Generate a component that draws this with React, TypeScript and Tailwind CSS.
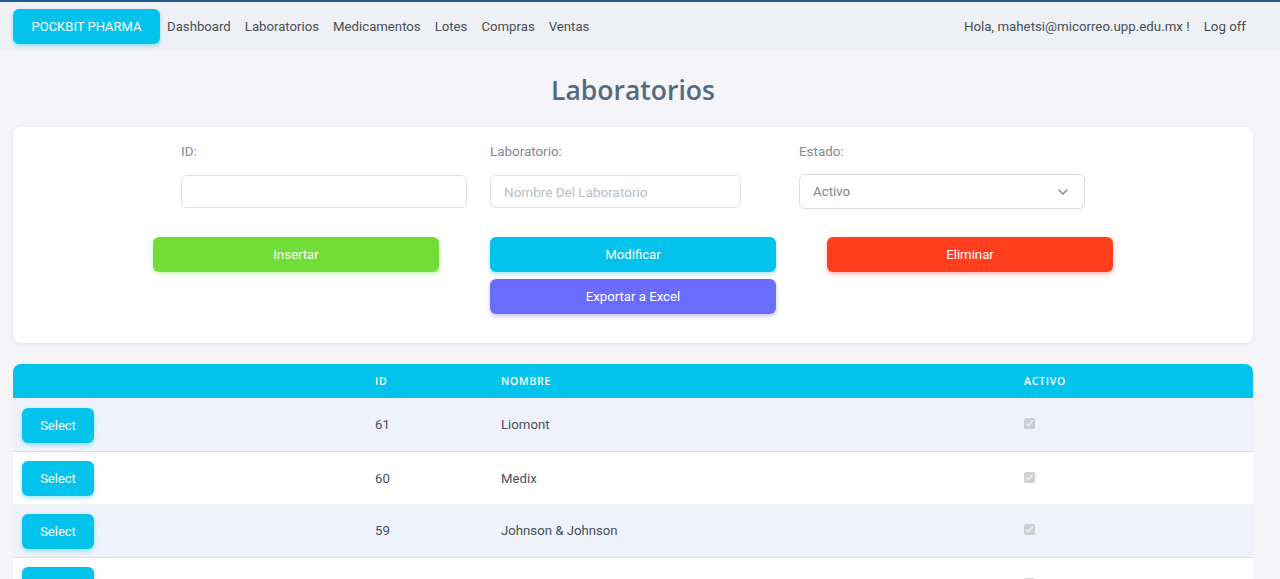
import { ChevronDown } from "lucide-react";

const NAV_LINKS = ["Dashboard", "Laboratorios", "Medicamentos", "Lotes", "Compras", "Ventas"];

// the fourth row runs off the bottom of the window, only the top of its button shows
const ROWS = [
  { id: "61", name: "Liomont", label: "Select" },
  { id: "60", name: "Medix", label: "Select" },
  { id: "59", name: "Johnson & Johnson", label: "Select" },
  { id: "", name: "", label: "" },
];

function Field({ label, width, children }: { label: string; width: string; children: React.ReactNode }) {
  return (
    <div className={width}>
      <label className="mb-[13px] block pt-[1px] text-[13.4px] leading-[20px] text-[#7f8a96]">{label}</label>
      {children}
    </div>
  );
}

export default function App() {
  return (
    <div className="h-[579px] overflow-hidden bg-[#f5f5f9] font-['Roboto',sans-serif]">
      <nav className="flex h-[51px] items-center justify-between border-t-2 border-[#1d5a8a] bg-[#eef0f4] pl-[13px] pr-[34px] text-[13.2px] text-[#4a4f55]">
        <div className="flex items-center">
          <a className="mr-[7px] flex h-[35px] w-[147px] items-center justify-center rounded-[6px] bg-[#03c3ec] text-[13px] text-white shadow-[0_2px_4px_rgba(3,195,236,0.4)]">
            POCKBIT PHARMA
          </a>
          <ul className="flex gap-[14px]">
            {NAV_LINKS.map((link) => (
              <li key={link}>{link}</li>
            ))}
          </ul>
        </div>
        <div className="flex gap-[14px] text-[13.3px]">
          <span>Hola, mahetsi@micorreo.upp.edu.mx !</span>
          <span>Log off</span>
        </div>
      </nav>

      <main className="w-[1266px] px-[13px]">
        <h1 className="mt-[19px] text-center font-['Open_Sans',sans-serif] text-[26.5px] font-semibold leading-[40px] text-[#566a7f]">Laboratorios</h1>

        <section className="mt-[17px] h-[216px] rounded-[8px] bg-white pt-[14px] shadow-[0_1px_4px_rgba(67,89,113,0.12)]">
          <div className="flex pl-[168px]">
            <Field label="ID:" width="w-[286px]">
              <input className="block h-[33px] w-full rounded-[6px] border border-[#dfe2e6] bg-white" />
            </Field>
            <Field label="Laboratorio:" width="ml-[23px] w-[251px]">
              <input
                placeholder="Nombre Del Laboratorio"
                className="block h-[33px] w-full rounded-[6px] border border-[#dfe2e6] bg-white px-[13px] text-[13.5px] placeholder:text-[#b8bec5]"
              />
            </Field>
            <Field label="Estado:" width="ml-[58px] w-[286px]">
              <div className="-mt-px flex h-[35px] items-center justify-between rounded-[6px] border border-[#d9dde1] bg-white px-[13px] text-[13.3px] text-[#7b858f]">
                <span>Activo</span>
                <ChevronDown className="h-[16px] w-[16px] text-[#7b858f]" />
              </div>
            </Field>
          </div>

          <div className="mt-[28px] flex items-start gap-[51px] pl-[140px] text-[13.2px] text-white">
            <button className="h-[35px] w-[286px] rounded-[6px] bg-[#71dd37] pt-[1px] shadow-[0_2px_4px_rgba(113,221,55,0.4)]">Insertar</button>
            <div className="flex w-[286px] flex-col gap-[7px]">
              <button className="h-[35px] rounded-[6px] bg-[#03c3ec] pt-[1px] shadow-[0_2px_4px_rgba(3,195,236,0.4)]">Modificar</button>
              <button className="h-[35px] rounded-[6px] bg-[#696cff] shadow-[0_2px_4px_rgba(105,108,255,0.4)]">Exportar a Excel</button>
            </div>
            <button className="h-[35px] w-[286px] rounded-[6px] bg-[#ff3e1d] pt-[1px] shadow-[0_2px_4px_rgba(255,62,29,0.4)]">Eliminar</button>
          </div>
        </section>

        <section className="mt-[21px]">
          <table className="w-full table-fixed border-collapse text-[13.2px] text-[#4a4f55]">
            <colgroup>
              <col className="w-[353px]" />
              <col className="w-[126px]" />
              <col className="w-[523px]" />
              <col />
            </colgroup>
            <thead>
              <tr className="h-[34px] bg-[#03c3ec] text-left font-['Open_Sans',sans-serif] text-[10.5px] font-semibold tracking-[0.75px] text-white">
                <th className="rounded-tl-[8px]" />
                <th className="px-[9px] pt-[1px] font-semibold">ID</th>
                <th className="px-[9px] pt-[1px] font-semibold">NOMBRE</th>
                <th className="rounded-tr-[8px] px-[9px] pt-[1px] font-semibold">ACTIVO</th>
              </tr>
            </thead>
            <tbody>
              {ROWS.map((row, i) => (
                <tr key={i} className={i % 2 === 0 ? "h-[53px] border-b border-[#dde0e6] bg-[#eff2fb]" : "h-[53px] bg-white"}>
                  <td className="px-[9px] pt-[2px]">
                    <button className="block h-[35px] w-[72px] rounded-[6px] bg-[#03c3ec] text-[13px] text-white shadow-[0_2px_4px_rgba(3,195,236,0.4)]">{row.label}</button>
                  </td>
                  <td className="px-[9px] pt-[2px]">{row.id}</td>
                  <td className="px-[9px] pt-[2px]">{row.name}</td>
                  <td className="px-[9px]">
                    <input type="checkbox" checked disabled readOnly className="-mt-[1px] block h-[11px] w-[11px]" />
                  </td>
                </tr>
              ))}
            </tbody>
          </table>
        </section>
      </main>
    </div>
  );
}
